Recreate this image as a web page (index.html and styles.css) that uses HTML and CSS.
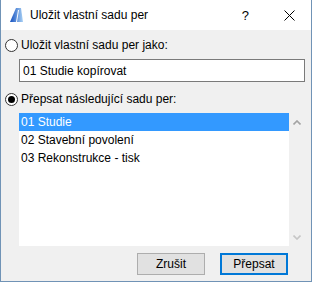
FILE: index.html
```html
<!DOCTYPE html>
<html>
<head>
    <title>Uložit vlastní sadu per</title>
    <link rel="stylesheet" href="styles.css">
</head>
<body>

    <div class="window">
        <div class="titlebar">
            <svg class="app-icon" width="14" height="14" viewBox="0 0 14 14">
                <defs>
                    <linearGradient id="iconGrad" x1="0" y1="0" x2="1" y2="0">
                        <stop offset="0" stop-color="#1450c0"/>
                        <stop offset="1" stop-color="#a8d0f4"/>
                    </linearGradient>
                </defs>
                <polygon points="0,14 6,0 11,0 13,14" fill="url(#iconGrad)"/>
                <line x1="6.5" y1="14" x2="8.5" y2="2" stroke="#ffffff" stroke-width="1"/>
            </svg>
            <span class="title">Uložit vlastní sadu per</span>
            <span class="help">?</span>
            <svg class="close" width="11" height="11" viewBox="0 0 11 11">
                <path d="M0.5 0.5 L10.5 10.5 M10.5 0.5 L0.5 10.5" stroke="#000000" stroke-width="1"/>
            </svg>
        </div>

        <div class="content">
            <label class="radio-row">
                <span class="radio"></span>
                Uložit vlastní sadu per jako:
            </label>
            <input class="name-input" type="text" value="01 Studie kopírovat">

            <label class="radio-row second">
                <span class="radio checked"></span>
                Přepsat následující sadu per:
            </label>
            <div class="list">
                <ul class="items">
                    <li class="selected">01 Studie</li>
                    <li>02 Stavební povolení</li>
                    <li>03 Rekonstrukce - tisk</li>
                </ul>
                <div class="scrollbar">
                    <svg width="8" height="5" viewBox="0 0 8 5">
                        <path d="M0.5 4.5 L4 1 L7.5 4.5" stroke="#a3a3a3" stroke-width="1.6" fill="none"/>
                    </svg>
                    <svg width="8" height="5" viewBox="0 0 8 5">
                        <path d="M0.5 0.5 L4 4 L7.5 0.5" stroke="#c6c6c6" stroke-width="1.6" fill="none"/>
                    </svg>
                </div>
            </div>

            <div class="buttons">
                <button>Zrušit</button>
                <button class="default">Přepsat</button>
            </div>
        </div>
    </div>

</body>
</html>
```

FILE: styles.css
```css
body {
    margin: 0;
    font-family: "Liberation Sans", Arial, sans-serif;
    font-size: 12px;
    color: #000;
}

.window {
    width: 312px;
    height: 282px;
    box-sizing: border-box;
    border: 1px solid #7093b6;
    border-top: none;
    display: flex;
    flex-direction: column;
}

.titlebar {
    height: 30px;
    background-color: #fff;
    display: flex;
    align-items: center;
    flex-shrink: 0;
}

.app-icon {
    margin-left: 9px;
    margin-right: 6px;
}

.title {
    flex: 1;
    font-size: 12px;
}

.help {
    font-size: 13px;
    margin-right: 35px;
}

.close {
    margin-right: 16px;
}

.content {
    flex: 1;
    background-color: #f0f0f0;
    padding: 7px 6px 0 4px;
    display: flex;
    flex-direction: column;
}

.radio-row {
    height: 16px;
    display: flex;
    align-items: center;
    gap: 3px;
}

.radio-row.second {
    margin-top: 9px;
}

.radio {
    width: 13px;
    height: 13px;
    box-sizing: border-box;
    border: 1px solid #333;
    border-radius: 50%;
    background-color: #fff;
    display: flex;
    align-items: center;
    justify-content: center;
}

.radio.checked::after {
    content: "";
    width: 7px;
    height: 7px;
    border-radius: 50%;
    background-color: #000;
}

.name-input {
    margin: 6px 0 0 14px;
    height: 23px;
    box-sizing: border-box;
    border: 1px solid #7a7a7a;
    padding: 0 3px;
    font-family: inherit;
    font-size: 12px;
    color: #000;
    background-color: #fff;
    outline: none;
}

.list {
    margin: 6px 0 0 14px;
    height: 133px;
    display: flex;
}

.items {
    flex: 1;
    margin: 0;
    padding: 0;
    list-style: none;
    background-color: #fff;
}

.items li {
    height: 18px;
    line-height: 18px;
    padding-left: 2px;
}

.items li.selected {
    background-color: #3399ff;
    color: #fff;
}

.scrollbar {
    width: 16px;
    background-color: #f0f0f0;
    display: flex;
    flex-direction: column;
    justify-content: space-between;
    align-items: center;
    padding: 7px 0 6px;
    box-sizing: border-box;
}

.buttons {
    margin-top: 7px;
    padding-right: 17px;
    display: flex;
    justify-content: flex-end;
    gap: 15px;
}

.buttons button {
    width: 68px;
    height: 22px;
    box-sizing: border-box;
    border: 1px solid #adadad;
    background-color: #e1e1e1;
    font-family: inherit;
    font-size: 12px;
    color: #000;
    padding: 0;
}

.buttons button.default {
    border: 2px solid #0078d7;
}
```
